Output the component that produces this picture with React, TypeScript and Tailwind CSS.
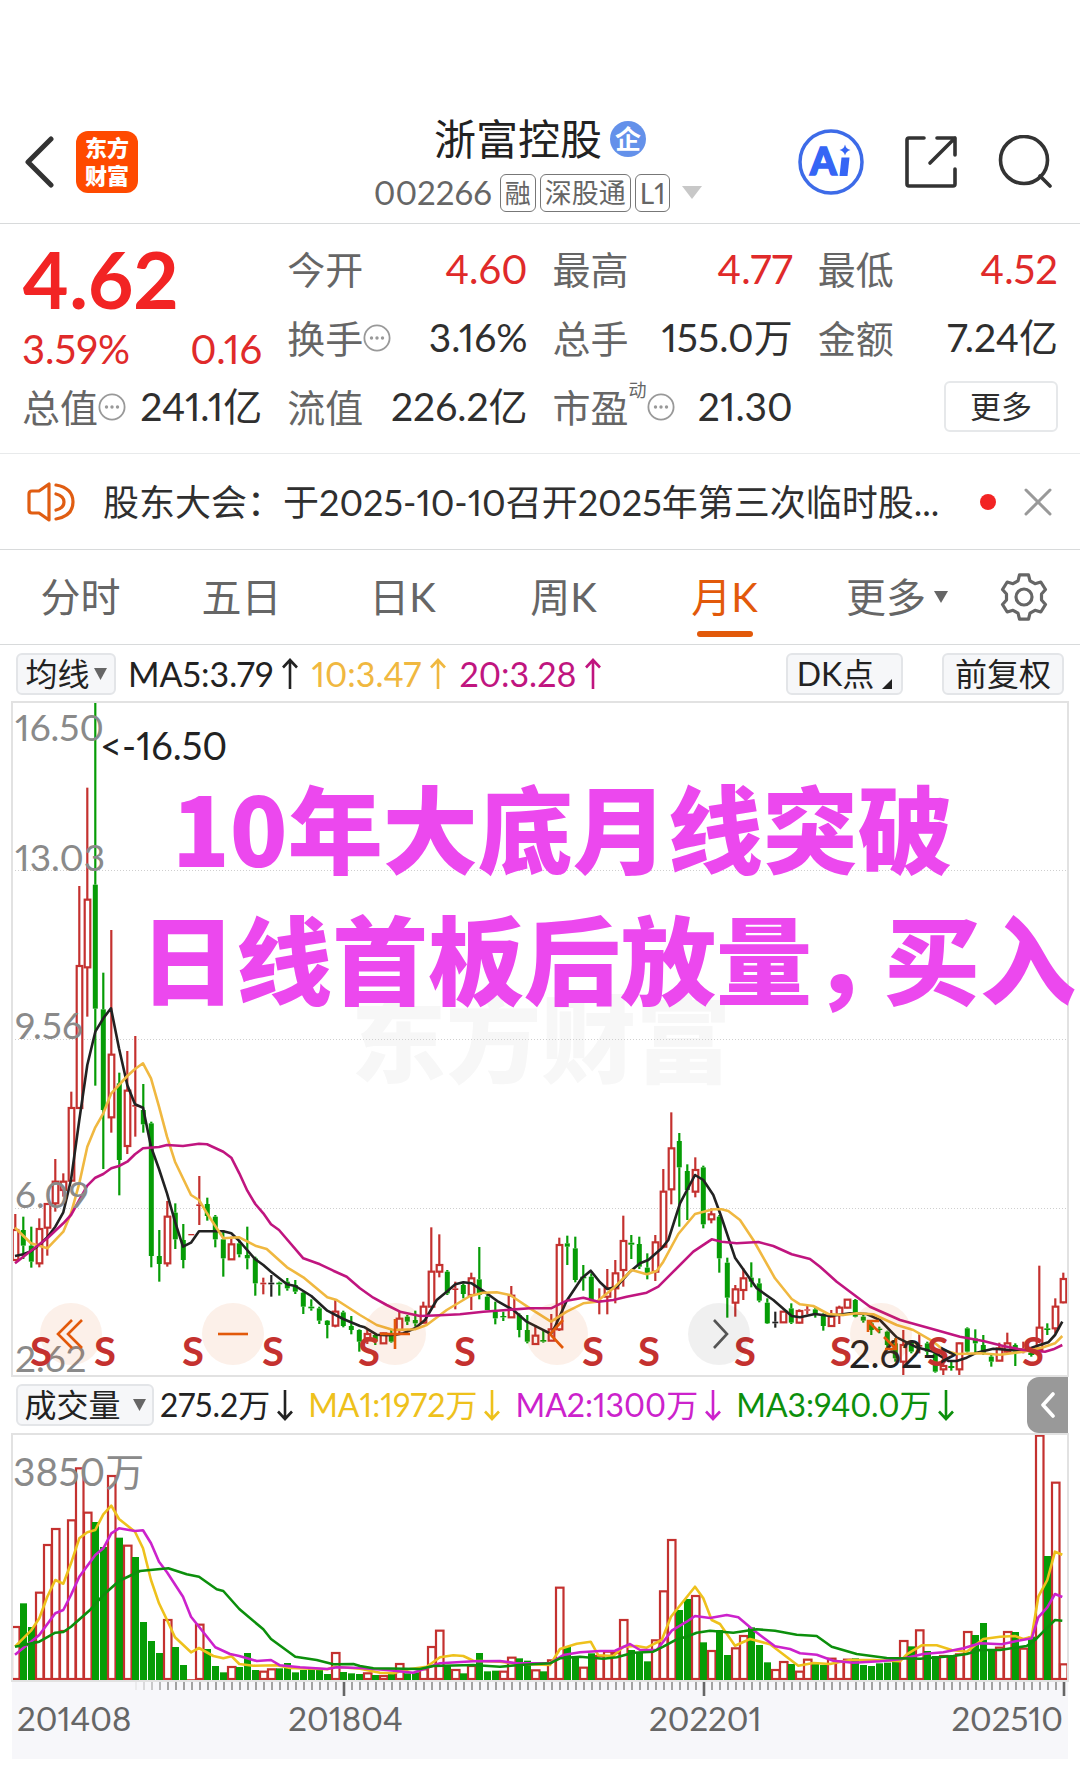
import React from "react";

const UP = "#c4312f";
const DOWN = "#069c06";
const FLAT = "#222222";

const ORIGIN_X = 12;

// Candles, one per month: kind, high, body top, body bottom, low (thirds of a unit).
const CANDLES = `R 522 570 660 660|G 530 570 617 657|G 560 617 665 683|R 535 567 670 682|R 492 492 563 647|R 357 425 490 515|R 400 425 450 470|R 155 204 422 422
R -462 -222 204 204|R -757 -421 -218 -70|G -1014 -466 -94 137|G -202 -92 210 387|R -330 44 232 278|G 98 130 360 466|R 33 152 318 342|R -12 195 200 290
G 132 210 253 278|G 245 250 648 682|G 570 648 672 725|R 483 530 670 680|G 490 518 598 627|G 552 600 660 685|R 583 582 586 583|R 408 493 498 555
G 473 492 528 542|G 525 530 598 622|G 570 598 655 710|R 590 613 658 658|G 600 610 643 652|G 560 645 655 688|G 650 655 730 767|R 713 728 733 763
K 705 728 733 770|G 725 728 733 767|G 714 725 745 752|G 720 735 755 762|G 755 758 800 822|G 778 800 805 812|G 800 805 842 852|G 840 842 855 895
R 778 815 857 862|G 812 817 858 862|G 828 858 870 883|G 868 870 905 935|R 870 882 895 912|G 880 885 905 915|R 878 880 910 910|G 870 880 905 908
R 812 836 870 880|G 825 830 845 855|G 812 840 850 860|R 785 800 848 850|R 562 695 800 800|R 583 675 695 712|G 690 695 760 765|R 725 745 750 808
G 730 735 762 775|R 698 715 765 810|G 621 718 765 778|G 765 770 810 810|G 785 815 835 853|G 815 828 832 843|R 738 767 832 832|G 820 825 870 892
G 825 870 905 910|R 855 887 912 912|G 870 900 905 908|R 822 868 902 902|R 593 615 868 873|G 587 610 620 675|G 590 625 720 727|G 675 710 715 752
G 700 710 782 785|R 745 780 785 823|R 687 745 770 823|R 660 700 745 790|R 527 603 690 740|G 585 608 614 657|G 590 612 680 687|G 640 683 703 718
R 585 607 695 723|R 387 455 620 625|R 217 325 448 493|G 279 303 382 560|G 373 393 450 540|R 352 390 455 472|G 377 382 553 565|R 505 523 538 550
G 525 530 655 698|G 653 668 773 833|R 735 748 788 830|R 685 715 750 780|G 667 713 725 742|G 715 730 782 787|G 775 788 850 852|K 815 845 850 863
R 815 815 847 847|G 790 805 848 852|R 808 813 848 850|R 795 808 812 823|G 800 808 825 833|G 820 828 858 872|R 810 830 858 860|R 797 803 825 852
R 777 779 803 805|G 777 780 830 832|G 825 830 842 848|G 840 850 870 885|G 860 866 870 880|G 872 875 915 925|G 895 910 955 965|R 870 915 965 1008
G 900 905 935 940|R 883 915 920 940|G 905 910 935 945|G 930 940 995 998|R 960 978 988 1010|G 965 978 984 992|R 908 910 988 1008|G 862 865 935 938
G 868 895 910 940|G 885 915 940 945|G 940 950 965 980|R 908 925 962 962|R 878 910 935 940|G 910 915 935 978|R 905 925 930 940|G 930 938 945 950
R 677 863 930 930|G 850 865 870 885|R 775 800 865 880|R 698 717 787 790`
  .split(/[|\n]/)
  .map((row) => {
    const [kind, ...rest] = row.trim().split(" ");
    return { kind, v: rest.map(Number) };
  });

const VOLUMES =
  `R618 G550 G621 R515 R372 R324 R630 R298 R142 R275 G306 G381 R165 G353 R374 G411 G606 G663 G699 R597 G681 G735 R778 R611 G687 G738 G757 R738 G741 G699 G750 R752 R745 G745 G729 G757 G750 G745 G748 G762 R696 G756 G760 G762 R757 G765 R765 G762 R729 G760 G757 R745 R678 R629 G738 R747 G760 R735 G699 G754 G752 R752 R710 G715 G722 R748 G754 R718 R500 G681 G708 R740 G700 R705 R692 R696 R597 G690 G699 G724 R658 R511 R357 G570 G537 R525 G667 R690 G630 G705 R682 R645 G622 G675 G727 R747 R723 G732 R752 R716 G730 G735 R713 R722 R716 G715 G735 G738 G730 G728 G722 R660 G679 R628 G693 G708 R705 G708 R700 R633 G645 G609 G687 R680 R633 G636 R683 G650 R44 G408 R185 R730`
    .split(" ")
    .map((s) => ({ kind: s[0], top: Number(s.slice(1)) }));

const PRICE_LINES = [
  {
    color: "#222222",
    pts: "45,648 70,643 93,634 118,615 142,592 166,560 190,517 213,420 238,240 262,75 286,-25 310,-65 333,-95 357,25 382,135 405,193 429,203 453,320 477,387 501,460 525,545 549,620 573,608 597,574 646,574 670,574 694,580 718,603 766,658 790,675 813,695 861,733 886,738 934,768 982,812 1030,837 1080,858 1094,862 1130,884 1160,886 1187,884 1210,880 1245,865 1275,840 1310,780 1340,755 1366,733 1390,727 1415,730 1460,760 1495,785 1540,810 1580,845 1620,865 1653,882 1665,860 1700,782 1745,715 1772,692 1800,727 1822,747 1850,740 1890,695 1920,670 1945,660 1985,625 2005,600 2040,490 2085,405 2110,420 2140,465 2162,525 2205,653 2270,745 2320,780 2375,828 2400,832 2445,822 2490,828 2550,820 2600,822 2640,840 2690,892 2750,922 2800,935 2845,963 2870,963 2900,953 2930,938 2980,926 3030,930 3070,932 3110,918 3145,907 3165,885 3187,845",
  },
  {
    color: "#f0b840",
    pts: "45,563 93,610 142,625 190,575 213,520 238,430 262,320 286,262 310,220 334,160 382,108 405,87 429,70 453,115 477,200 501,290 525,365 573,465 597,480 621,520 670,595 718,592 766,617 800,627 861,682 910,712 982,772 1010,780 1080,825 1130,855 1180,870 1245,868 1280,855 1340,810 1410,768 1450,758 1490,757 1530,765 1590,805 1653,845 1700,815 1750,790 1790,785 1840,745 1895,690 1940,703 1970,693 1990,665 2035,582 2085,522 2140,508 2165,508 2185,513 2220,540 2260,600 2325,715 2375,777 2400,793 2440,798 2485,822 2530,825 2570,820 2620,823 2690,855 2740,870 2800,905 2830,930 2870,942 2940,940 3000,944 3070,935 3130,922 3165,910 3187,888",
  },
  {
    color: "#c0157f",
    pts: "45,670 93,632 142,595 190,550 213,525 262,437 286,413 310,402 334,385 357,378 382,365 405,343 429,325 477,321 501,315 549,318 597,311 621,313 670,335 694,353 718,400 742,452 766,492 790,520 813,553 837,570 910,655 960,673 1000,692 1040,710 1080,745 1120,773 1160,795 1200,815 1260,828 1320,826 1380,823 1450,815 1520,810 1590,805 1653,805 1700,782 1750,773 1795,785 1840,780 1880,770 1940,758 1975,740 2020,695 2080,635 2135,598 2165,605 2210,610 2275,606 2320,618 2375,643 2430,657 2460,680 2510,725 2550,755 2610,800 2700,840 2800,868 2880,890 2950,903 3010,918 3070,930 3135,935 3160,928 3187,915",
  },
];

const VOLUME_LINES = [
  {
    color: "#eec11c",
    pts: "45,680 93,632 118,595 142,530 166,480 190,491 213,430 238,355 262,337 286,330 310,283 334,257 357,297 405,335 429,385 453,480 477,550 501,600 525,652 573,697 597,684 640,708 670,715 695,709 718,732 760,737 830,736 870,744 982,748 1006,740 1080,746 1140,758 1180,760 1230,747 1280,740 1320,712 1360,706 1390,708 1420,722 1500,725 1560,732 1650,735 1680,687 1730,671 1772,665 1795,706 1840,708 1870,680 1910,678 1940,683 1985,660 2013,590 2085,500 2110,535 2135,600 2160,612 2205,677 2250,657 2310,673 2395,737 2440,729 2490,732 2550,720 2620,720 2700,724 2720,703 2765,676 2810,676 2855,690 2900,695 2950,657 3000,650 3045,648 3070,657 3095,650 3115,530 3142,480 3165,395 3187,404",
  },
  {
    color: "#cc22cc",
    pts: "45,704 93,665 118,645 166,580 190,570 213,525 238,470 286,405 310,385 334,340 357,325 405,333 429,331 453,370 477,425 501,457 549,530 573,590 597,620 646,682 690,702 718,708 770,723 813,720 840,736 900,742 982,747 1010,742 1080,744 1160,750 1240,758 1290,740 1320,730 1420,724 1500,723 1550,730 1650,730 1690,705 1740,697 1800,693 1845,692 1890,672 1920,690 1970,690 1990,665 2015,632 2060,605 2085,588 2130,594 2180,585 2215,592 2260,630 2325,679 2370,687 2400,700 2450,704 2500,722 2560,728 2640,724 2700,718 2770,702 2830,697 2890,685 2940,670 3005,673 3050,663 3095,655 3115,592 3142,562 3165,522 3187,531",
  },
  {
    color: "#0c8f0c",
    pts: "45,680 118,665 166,638 190,636 213,620 270,570 310,525 357,483 420,453 505,445 560,463 597,470 650,508 670,513 718,567 790,628 813,657 886,710 950,720 1000,733 1060,732 1080,738 1120,745 1260,747 1300,738 1420,735 1500,740 1560,735 1650,730 1680,715 1740,710 1810,716 1850,712 1900,698 1960,695 1990,680 2030,658 2060,650 2090,638 2130,632 2200,638 2270,628 2325,632 2390,644 2450,648 2495,680 2570,702 2660,714 2760,716 2860,708 2900,702 2940,690 3000,690 3080,678 3105,660 3130,635 3165,600 3187,602",
  },
];

const SIGNALS = [41, 105, 193, 273, 369, 465, 593, 649, 745, 841, 938, 1033];

const place = (pts: string, baseY: number) =>
  pts
    .split(" ")
    .map((p) => {
      const [x, y] = p.split(",").map(Number);
      return `${(x / 3 - ORIGIN_X).toFixed(1)},${(y / 3 + baseY).toFixed(1)}`;
    })
    .join(" ");

const tone = (kind: string) => (kind === "R" ? UP : kind === "G" ? DOWN : FLAT);

function PriceChart() {
  const y = (v: number) => v / 3 + 338;
  return (
    <svg viewBox="0 0 1056 674" className="block h-auto w-full overflow-visible" role="img" aria-label="月K">
      <text x="529" y="374" textAnchor="middle" fontSize="95" fontWeight="900" fill="#f7f7f7">
        东方财富
      </text>
      {[168.5, 337.5, 506.5].map((g) => (
        <line key={g} x1="0" x2="1056" y1={g} y2={g} stroke="#cfcfcf" strokeDasharray="1 2" />
      ))}
      {CANDLES.map(({ kind, v }, i) => {
        const cx = 3.3 + i * 8;
        const [hi, top, bot, lo] = v.map(y);
        const c = tone(kind);
        const thin = bot - top < 3;
        return (
          <g key={i} stroke={c} strokeWidth="2.2">
            {hi < top && <line x1={cx} x2={cx} y1={hi} y2={top} />}
            {lo > bot && <line x1={cx} x2={cx} y1={bot} y2={lo} />}
            {thin ? (
              <rect x={cx - 3} y={top} width="6" height={bot - top} fill={c} stroke="none" />
            ) : kind === "R" ? (
              <rect x={cx - 2.6} y={top} width="5.6" height={bot - top} fill="#fff" />
            ) : (
              <rect x={cx - 2.5} y={top} width="5" height={bot - top} fill={c} stroke="none" />
            )}
          </g>
        );
      })}
      {PRICE_LINES.map((l) => (
        <polyline
          key={l.color}
          points={place(l.pts, 338)}
          fill="none"
          stroke={l.color}
          strokeWidth="2.6"
          strokeLinejoin="round"
        />
      ))}
      <g fontSize="37" fill="#8a8a8a">
        <text x="3" y="39">16.50</text>
        <text x="3" y="169">13.03</text>
        <text x="3" y="337">9.56</text>
        <text x="3" y="506">6.09</text>
        <text x="3" y="670">2.62</text>
      </g>
      <g fontSize="38" fill="#222222">
        <text x="88" y="58">&lt;-16.50</text>
      </g>
      <g fontSize="40" fontWeight="700" fill="#c4312f" textAnchor="middle">
        {SIGNALS.map((x) => (
          <text key={x} x={x - ORIGIN_X} y="664">
            S
          </text>
        ))}
      </g>
      <text x="837" y="666" fontSize="38" fill="#222222">
        2.62-&gt;
      </text>
    </svg>
  );
}

function VolumeChart() {
  const base = 246;
  return (
    <svg viewBox="0 0 1056 247" className="block h-auto w-full" role="img" aria-label="成交量">
      {VOLUMES.map(({ kind, top }, i) => {
        const cx = 3.5 + i * 8;
        const y = (top - 42) / 3;
        return kind === "R" ? (
          <rect
            key={i}
            x={cx - 3.5}
            y={y + 1}
            width="7.5"
            height={Math.max(base - y - 2, 1)}
            fill="#fff"
            stroke={UP}
            strokeWidth="2.2"
          />
        ) : (
          <rect key={i} x={cx - 3.5} y={y} width="7" height={base - y} fill={DOWN} />
        );
      })}
      {VOLUME_LINES.map((l) => (
        <polyline
          key={l.color}
          points={place(l.pts, -14)}
          fill="none"
          stroke={l.color}
          strokeWidth="2.6"
          strokeLinejoin="round"
        />
      ))}
      <text x="1" y="52" fontSize="39" fill="#8a8a8a">
        3850万
      </text>
    </svg>
  );
}

function TimeAxis() {
  const ticks = Array.from({ length: 117 }, (_, k) => 124 + k * 8);
  return (
    <svg viewBox="0 0 1056 16" className="block h-auto w-full" aria-hidden="true">
      {ticks.map((x, k) => (
        <line key={x} x1={x} x2={x} y1="1" y2="9" stroke="#8c8c8c" strokeWidth="1.6" opacity={Math.min(1, 0.15 + k * 0.2)} />
      ))}
      {[332, 692, 1052].map((x) => (
        <line key={x} x1={x} x2={x} y1="1" y2="15" stroke="#666" strokeWidth="2.6" />
      ))}
    </svg>
  );
}

const Dots = () => (
  <svg viewBox="0 0 28 28" className="size-7 shrink-0" aria-hidden="true">
    <circle cx="14" cy="14" r="12.6" fill="none" stroke="#999" strokeWidth="1.8" />
    <circle cx="8.5" cy="14" r="1.7" fill="#999" />
    <circle cx="14" cy="14" r="1.7" fill="#999" />
    <circle cx="19.5" cy="14" r="1.7" fill="#999" />
  </svg>
);

const Caret = ({ className }: { className: string }) => (
  <svg viewBox="0 0 14 12" preserveAspectRatio="none" className={className} aria-hidden="true">
    <path d="M0 0H14L7 12Z" fill="currentColor" />
  </svg>
);

const Arrow = ({ down = false }: { down?: boolean }) => (
  <svg viewBox="0 0 18 32" className="h-8 w-[18px] shrink-0" role="img" aria-label={down ? "↓" : "↑"}>
    <path
      d={down ? "M9 1V30M2 22.500L9 30L16 22.500" : "M9 31V2M2 9.500L9 2L16 9.500"}
      fill="none"
      stroke="currentColor"
      strokeWidth="2.6"
    />
  </svg>
);

function Stat({
  label,
  value,
  red = false,
  dots = false,
  sup,
}: {
  label: string;
  value: string;
  red?: boolean;
  dots?: boolean;
  sup?: string;
}) {
  return (
    <div className="flex h-[69px] items-center justify-between whitespace-nowrap">
      <dt className="flex items-center text-[38px] text-[#666]">
        {label}
        {sup && <sup className="-mt-4 text-lg leading-none">{sup}</sup>}
        {dots && <Dots />}
      </dt>
      <dd className={red ? "text-[40px] text-[#e02a2a]" : "text-[39px] text-[#2f2f2f]"}>{value}</dd>
    </div>
  );
}

const CIRCLE_ICONS: { name: string; d: string; grey?: boolean }[] = [
  { name: "快退", d: "M32 17L18 31L32 45M42 17L28 31L42 45" },
  { name: "缩小", d: "M16 31H46" },
  { name: "放大", d: "M16 31H46M31 16V46" },
  { name: "后退", d: "M37 17L24 31L37 45" },
  { name: "前进", d: "M26 17L39 31L26 45", grey: true },
  { name: "全屏", d: "M18 29V18H29M18 18L29 29M46 35V46H35M46 46L34 34" },
];

const TABS = ["分时", "五日", "日K", "周K", "月K"];

export default function App() {
  return (
    <main className="min-h-screen w-full bg-white pt-[100px] pb-2 font-['Lato','Noto_Sans_CJK_SC',sans-serif] leading-none text-[#222] proportional-nums">
      <header className="grid h-[124px] grid-cols-[1fr_auto_1fr] items-center border-b border-[#d8dadb] pr-7 pl-6">
        <div className="flex items-center gap-[22px]">
          <button type="button" aria-label="返回">
            <svg viewBox="0 0 30 52" className="h-[52px] w-[30px]">
              <path d="M27 3L4 26L27 49" fill="none" stroke="#333" strokeWidth="5" strokeLinecap="round" strokeLinejoin="round" />
            </svg>
          </button>
          <div className="flex size-[62px] flex-col items-center justify-center gap-1 rounded-xl bg-[#ff4a00] text-[22px] leading-6 font-black text-white">
            <span>东方</span>
            <span>财富</span>
          </div>
        </div>
        <div className="flex flex-col items-center gap-[10px] pt-[2px]">
          <div className="flex items-center gap-2 pl-1">
            <h1 className="text-[42px] leading-[50px]">浙富控股</h1>
            <span className="flex size-9 items-center justify-center rounded-full bg-[#6491ea] text-[26px] font-bold text-white">企</span>
          </div>
          <div className="flex items-center gap-1 text-[28px] text-[#666]">
            <span className="mr-1 text-[33px]">002266</span>
            <span className="flex h-[38px] items-center rounded-md border border-[#777] px-1 text-[26px]">融</span>
            <span className="flex h-[38px] items-center rounded-md border border-[#777] px-1 text-[27px]">深股通</span>
            <span className="flex h-[38px] items-center rounded-md border border-[#777] px-1">L1</span>
            <Caret className="ml-2 h-[13px] w-5 text-[#c8c8c8]" />
          </div>
        </div>
        <div className="flex items-center justify-end gap-10">
          <button type="button" aria-label="Ai">
            <svg viewBox="0 0 66 66" className="size-[66px]">
              <circle cx="33" cy="33" r="31" fill="none" stroke="#3d6be8" strokeWidth="3.500" />
              <text x="12" y="46" fontSize="38" fontWeight="900" fontFamily="Lato" fill="#3565f5" stroke="#3565f5" strokeWidth="1.500">
                A
              </text>
              <path d="M43.500 28.500H51.500L49.500 47H41.500Z" fill="#3565f5" />
              <path d="M47 15.500Q48 20 52.500 21Q48 22 47 26.500Q46 22 41.500 21Q46 20 47 15.500Z" fill="#3565f5" />
            </svg>
          </button>
          <button type="button" aria-label="分享">
            <svg viewBox="0 0 54 54" className="size-[54px]" fill="none" stroke="#333" strokeWidth="3.600" strokeLinecap="round" strokeLinejoin="round">
              <path d="M20 3H5Q3 3 3 5V49Q3 51 5 51H49Q51 51 51 49V34M33 3H51V20M51 3L26 28" />
            </svg>
          </button>
          <button type="button" aria-label="搜索">
            <svg viewBox="0 0 54 54" className="size-[54px]" fill="none" stroke="#333" strokeWidth="3.600" strokeLinecap="round">
              <circle cx="26" cy="25" r="23.500" />
              <path d="M42 41L52 51" />
            </svg>
          </button>
        </div>
      </header>

      <dl className="grid grid-cols-4 gap-x-[25px] border-b border-[#e8eaeb] px-[22px] pt-[10px] pb-3">
        <div className="flex flex-col">
          <div className="flex h-[138px] flex-col text-[#f22424]">
            <strong className="mt-[7px] text-[79px] leading-[76px]">4.62</strong>
            <div className="flex justify-between text-[40px] leading-[64px] text-[#e02a2a]">
              <span>3.59%</span>
              <span>0.16</span>
            </div>
          </div>
          <Stat label="总值" dots value="241.1亿" />
        </div>
        <div>
          <Stat label="今开" value="4.60" red />
          <Stat label="换手" dots value="3.16%" />
          <Stat label="流值" value="226.2亿" />
        </div>
        <div>
          <Stat label="最高" value="4.77" red />
          <Stat label="总手" value="155.0万" />
          <Stat label="市盈" sup="动" dots value="21.30" />
        </div>
        <div>
          <Stat label="最低" value="4.52" red />
          <Stat label="金额" value="7.24亿" />
          <div className="flex h-[69px] items-center justify-end">
            <button type="button" className="h-[51px] w-[114px] rounded-md border-2 border-[#e6e8ea] text-[31px] text-[#2f2f2f]">
              更多
            </button>
          </div>
        </div>
      </dl>

      <section className="flex h-24 items-center border-b border-[#d8dadb] pr-7 pl-[27px] text-[#2f2f2f]">
        <svg viewBox="0 0 48 40" className="h-10 w-12 shrink-0" fill="none" stroke="#e05d12" strokeWidth="3.200" strokeLinejoin="round" aria-hidden="true">
          <path d="M22 2V38L12 31H5Q2 31 2 28V12Q2 9 5 9H12Z" />
          <path d="M29 12Q37 14 37 20T29 28M29 3Q46 6 46 20T29 37" strokeLinecap="round" />
        </svg>
        <p className="ml-7 min-w-0 flex-1 truncate text-4xl leading-[48px]">
          股东大会：于2025-10-10召开2025年第三次临时股...
        </p>
        <span className="ml-7 size-4 rounded-full bg-[#f22424]" />
        <button type="button" aria-label="关闭" className="ml-7">
          <svg viewBox="0 0 28 28" className="size-7">
            <path d="M2 2L26 26M26 2L2 26" stroke="#999" strokeWidth="3" strokeLinecap="round" />
          </svg>
        </button>
      </section>

      <nav className="flex h-[95px] items-stretch border-b border-[#d8dadb] text-[40px] text-[#666]">
        {TABS.map((t) => (
          <button
            key={t}
            type="button"
            className={t === "月K" ? "relative flex-1 text-[#e2590a]" : "relative flex-1"}
          >
            {t}
            {t === "月K" && (
              <span className="absolute bottom-[7px] left-1/2 h-[6px] w-14 -translate-x-1/2 rounded-full bg-[#e2590a]" />
            )}
          </button>
        ))}
        <button type="button" className="flex w-[163px] items-center justify-end gap-2 pr-5">
          更多
          <Caret className="h-3 w-[14px] text-[#666]" />
        </button>
        <button type="button" aria-label="设置" className="flex w-28 items-center justify-center">
          <svg viewBox="0 0 48 48" className="size-12" fill="none" stroke="#666" strokeWidth="3.200" strokeLinejoin="round">
            <path d="M19.500 1.800H28.500L30 7.800L35 10.700L40.800 9L45.500 16.500L41.500 21V27L45.500 31.500L40.800 39L35 37.300L30 40.200L28.500 46.200H19.500L18 40.200L13 37.300L7.200 39L2.500 31.500L6.500 27V21L2.500 16.500L7.200 9L13 10.700L18 7.800Z" />
            <circle cx="24" cy="24" r="8" />
          </svg>
        </button>
      </nav>

      <div className="flex h-[57px] items-center pr-4 pl-4 text-[34px]">
        <button type="button" className="flex h-[42px] w-[100px] items-center justify-center gap-1 rounded-md border-2 border-[#e3e5e8] bg-[#f6f7f9] text-[32px]">
          均线
          <Caret className="h-3 w-[13px] text-[#666]" />
        </button>
        <div className="ml-3 flex items-center gap-3">
          <span className="flex items-center gap-2">MA5:3.79<Arrow /></span>
          <span className="flex items-center gap-2 text-[#f0b840]">10:3.47<Arrow /></span>
          <span className="flex items-center gap-2 text-[#c0157f]">20:3.28<Arrow /></span>
        </div>
        <button type="button" className="ml-auto flex h-[42px] w-[117px] items-center justify-center gap-2 rounded-md border-2 border-[#e3e5e8] bg-[#f6f7f9] text-[32px]">
          DK点
          <svg viewBox="0 0 10 10" className="mt-5 size-[10px]" aria-hidden="true">
            <path d="M10 0V10H0Z" fill="#222" />
          </svg>
        </button>
        <button type="button" className="ml-[39px] h-[42px] w-[122px] rounded-md border-2 border-[#e3e5e8] bg-[#f6f7f9] text-[32px]">
          前复权
        </button>
      </div>

      <section className="relative mx-3 outline-2 -outline-offset-1 outline-[#e2e2e2]">
        <PriceChart />
        <div className="absolute bottom-[11px] left-7 flex gap-[100px]">
          {CIRCLE_ICONS.map((c) => (
            <button
              key={c.name}
              type="button"
              aria-label={c.name}
              className={
                c.grey
                  ? "size-[62px] rounded-full bg-black/6 text-[#555]"
                  : "size-[62px] rounded-full bg-[#e2590a]/9 text-[#e2590a]"
              }
            >
              <svg viewBox="0 0 62 62" className="size-full">
                <path d={c.d} fill="none" stroke="currentColor" strokeWidth="2.600" />
              </svg>
            </button>
          ))}
        </div>
        <div className="absolute top-[59px] left-32 font-['Noto_Sans_CJK_SC',sans-serif] leading-[130px] font-black whitespace-nowrap text-[#ec48ee]">
          <p className="pl-8 text-[95px]">10年大底月线突破</p>
          <p className="text-[96px]">
            日线首板后放量<span className="mr-6 [font-feature-settings:'halt']">，</span>买入
          </p>
        </div>
      </section>

      <div className="flex h-[58px] items-center pr-3 pl-4 text-[32px]">
        <button type="button" className="flex h-[42px] w-[138px] items-center justify-center gap-3 rounded-md border-2 border-[#e3e5e8] bg-[#f6f7f9]">
          成交量
          <Caret className="h-3 w-[13px] text-[#666]" />
        </button>
        <div className="ml-[6px] flex items-center gap-[14px] whitespace-nowrap">
          <span className="flex items-center gap-[6px]">275.2万<Arrow down /></span>
          <span className="flex items-center gap-[6px] text-[#eec11c]">MA1:1972万<Arrow down /></span>
          <span className="flex items-center gap-[6px] text-[#cc22cc]">MA2:1300万<Arrow down /></span>
          <span className="flex items-center gap-[6px] text-[#0c8f0c]">MA3:940.0万<Arrow down /></span>
        </div>
        <button type="button" aria-label="展开" className="ml-auto flex h-14 w-[41px] shrink-0 items-center justify-center rounded-l-xl bg-[#999]">
          <svg viewBox="0 0 16 26" className="h-[26px] w-4">
            <path d="M13 2L3 13L13 24" fill="none" stroke="#fff" strokeWidth="3.600" strokeLinecap="round" strokeLinejoin="round" />
          </svg>
        </button>
      </div>

      <section className="mx-3 outline-2 -outline-offset-1 outline-[#e2e2e2]">
        <VolumeChart />
      </section>
      <div className="mx-3 h-[78px] bg-[#f7f7fa] text-[33px] text-[#666]">
        <TimeAxis />
        <div className="grid grid-cols-[1fr_1fr_1fr_1fr_1fr_1fr] px-[5px] pt-[5px]">
          <span>201408</span>
          <span className="col-span-2 pl-[97px]">201804</span>
          <span className="col-span-2 pl-[109px]">202201</span>
          <span className="text-right">202510</span>
        </div>
      </div>
    </main>
  );
}
